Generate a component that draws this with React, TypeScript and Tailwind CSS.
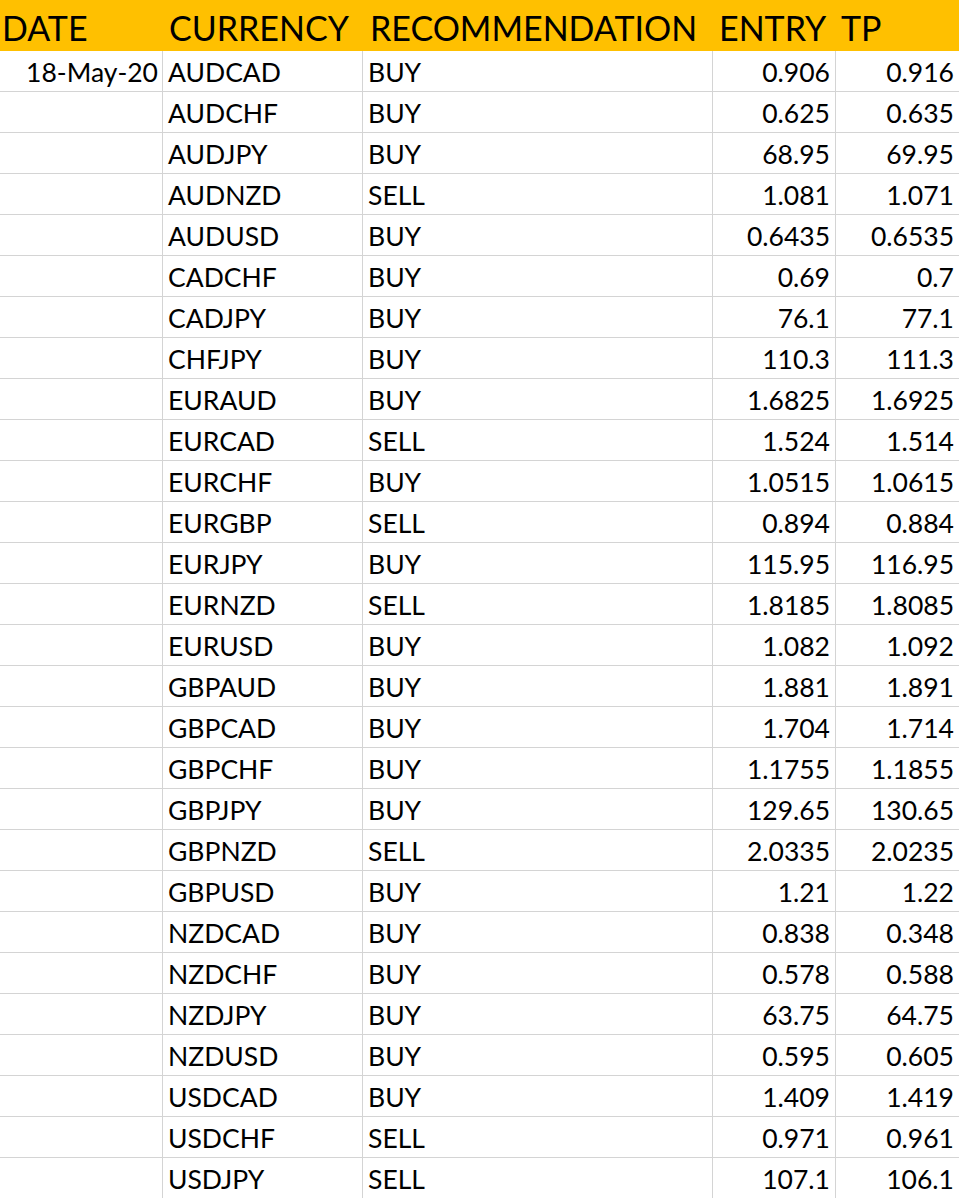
import React from "react";

const rows: [string, string, string, string][] = [
  ["AUDCAD", "BUY", "0.906", "0.916"],
  ["AUDCHF", "BUY", "0.625", "0.635"],
  ["AUDJPY", "BUY", "68.95", "69.95"],
  ["AUDNZD", "SELL", "1.081", "1.071"],
  ["AUDUSD", "BUY", "0.6435", "0.6535"],
  ["CADCHF", "BUY", "0.69", "0.7"],
  ["CADJPY", "BUY", "76.1", "77.1"],
  ["CHFJPY", "BUY", "110.3", "111.3"],
  ["EURAUD", "BUY", "1.6825", "1.6925"],
  ["EURCAD", "SELL", "1.524", "1.514"],
  ["EURCHF", "BUY", "1.0515", "1.0615"],
  ["EURGBP", "SELL", "0.894", "0.884"],
  ["EURJPY", "BUY", "115.95", "116.95"],
  ["EURNZD", "SELL", "1.8185", "1.8085"],
  ["EURUSD", "BUY", "1.082", "1.092"],
  ["GBPAUD", "BUY", "1.881", "1.891"],
  ["GBPCAD", "BUY", "1.704", "1.714"],
  ["GBPCHF", "BUY", "1.1755", "1.1855"],
  ["GBPJPY", "BUY", "129.65", "130.65"],
  ["GBPNZD", "SELL", "2.0335", "2.0235"],
  ["GBPUSD", "BUY", "1.21", "1.22"],
  ["NZDCAD", "BUY", "0.838", "0.348"],
  ["NZDCHF", "BUY", "0.578", "0.588"],
  ["NZDJPY", "BUY", "63.75", "64.75"],
  ["NZDUSD", "BUY", "0.595", "0.605"],
  ["USDCAD", "BUY", "1.409", "1.419"],
  ["USDCHF", "SELL", "0.971", "0.961"],
  ["USDJPY", "SELL", "107.1", "106.1"],
];

const cols = "grid grid-cols-[163px_200px_350px_123px_123px]";

export default function App() {
  return (
    <div
      className="w-[959px] h-[1198px] overflow-hidden bg-white text-black"
      style={{ fontFamily: "Lato, 'Open Sans', sans-serif" }}
    >
      <div className={`${cols} h-[51px] bg-[#ffc000] text-[34px] leading-none items-center`}>
        <div className="pl-[2px] pt-[4px]">DATE</div>
        <div className="pl-[6px] pt-[4px]">CURRENCY</div>
        <div className="pl-[7px] pt-[4px]">RECOMMENDATION</div>
        <div className="pl-[6px] pt-[4px]">ENTRY</div>
        <div className="pl-[5px] pt-[4px]">TP</div>
      </div>
      {rows.map((r, i) => (
        <div key={i} className={`${cols} h-[41px] text-[26.5px] leading-none`}>
          <div className="border-r border-b border-[#d4d4d4] flex items-center justify-end pr-[4px] pt-[3px]">
            {i === 0 ? "18-May-20" : ""}
          </div>
          <div className="border-r border-b border-[#d4d4d4] flex items-center pl-[5px] pt-[3px]">
            {r[0]}
          </div>
          <div className="border-r border-b border-[#d4d4d4] flex items-center pl-[5px] pt-[3px]">
            {r[1]}
          </div>
          <div className="border-r border-b border-[#d4d4d4] flex items-center justify-end pr-[5px] pt-[3px]">
            {r[2]}
          </div>
          <div className="border-b border-[#d4d4d4] flex items-center justify-end pr-[5px] pt-[3px]">
            {r[3]}
          </div>
        </div>
      ))}
    </div>
  );
}
